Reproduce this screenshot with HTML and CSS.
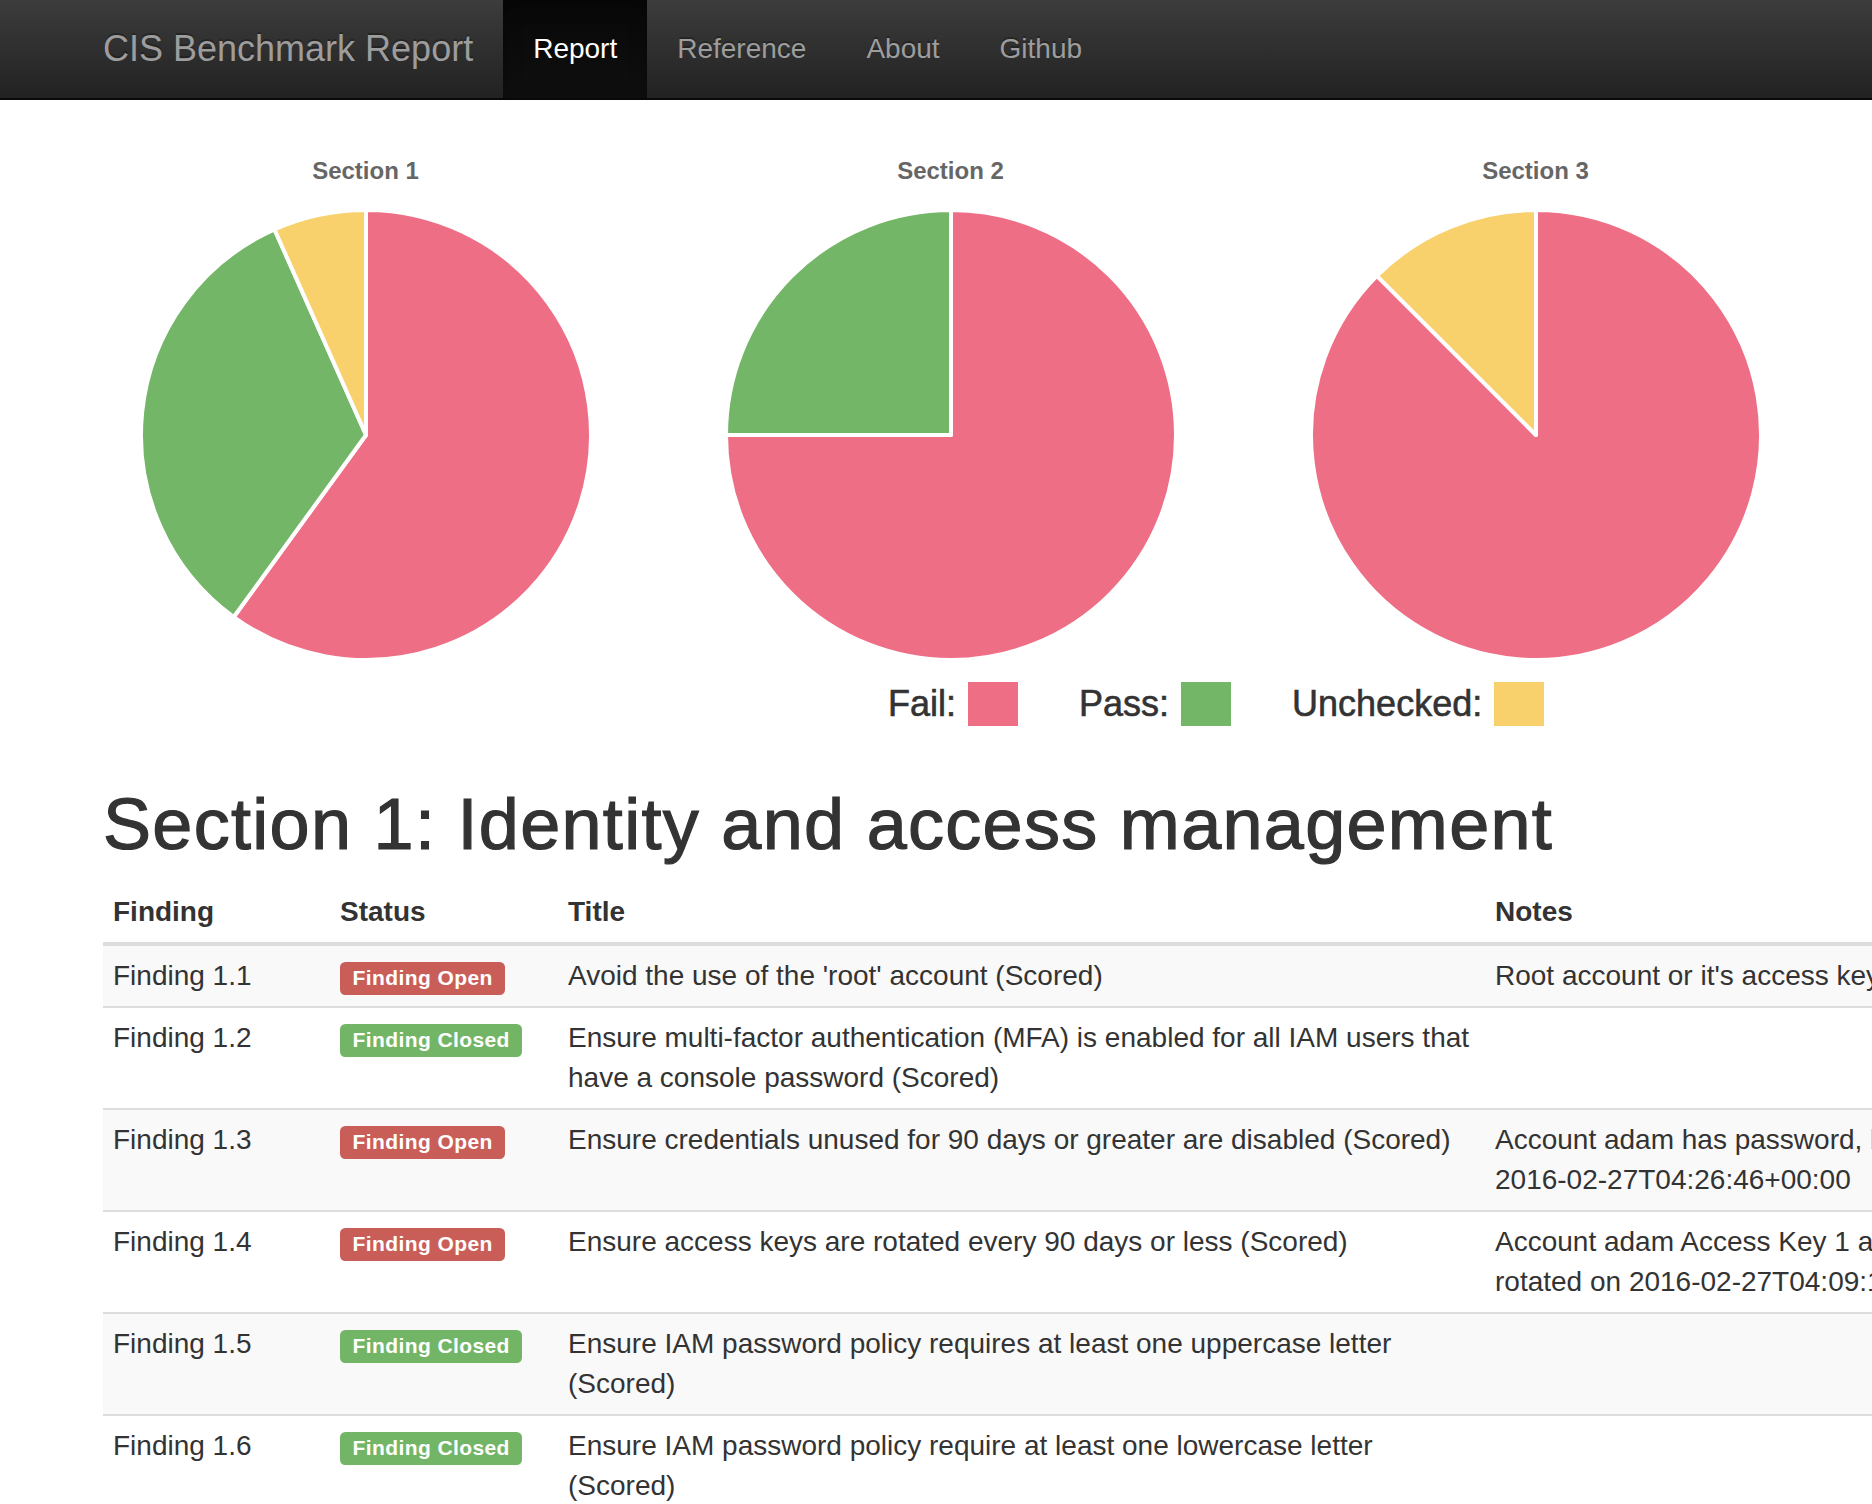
FILE: index.html
```html
<!DOCTYPE html>
<html lang="en">
<head>
<meta charset="utf-8">
<title>CIS Benchmark Report</title>
<link rel="stylesheet" href="styles.css">
</head>
<body>
<nav class="navbar">
  <div class="container nav-inner">
    <a class="brand" href="#">CIS Benchmark Report</a>
    <ul class="nav">
      <li class="active"><a href="#">Report</a></li>
      <li><a href="#">Reference</a></li>
      <li><a href="#">About</a></li>
      <li><a href="#">Github</a></li>
    </ul>
  </div>
</nav>

<div class="container">
  <div class="charts">
    <div class="chart">
      <div class="chart-title">Section 1</div>
      <svg class="pie" width="450" height="450" viewBox="0 0 450 450">
        <path class="fail" d="M225,225 L225,0 A225,225 0 1 1 92.75,407.03 Z"/>
        <path class="pass" d="M225,225 L92.75,407.03 A225,225 0 0 1 133.49,19.45 Z"/>
        <path class="unchecked" d="M225,225 L133.49,19.45 A225,225 0 0 1 225,0 Z"/>
      </svg>
    </div>
    <div class="chart">
      <div class="chart-title">Section 2</div>
      <svg class="pie" width="450" height="450" viewBox="0 0 450 450">
        <path class="fail" d="M225,225 L225,0 A225,225 0 1 1 0,225 Z"/>
        <path class="pass" d="M225,225 L0,225 A225,225 0 0 1 225,0 Z"/>
      </svg>
    </div>
    <div class="chart">
      <div class="chart-title">Section 3</div>
      <svg class="pie" width="450" height="450" viewBox="0 0 450 450">
        <path class="fail" d="M225,225 L225,0 A225,225 0 1 1 65.9,65.9 Z"/>
        <path class="unchecked" d="M225,225 L65.9,65.9 A225,225 0 0 1 225,0 Z"/>
      </svg>
    </div>
  </div>

  <div class="legend">
    <div class="legend-item"><span>Fail:</span><span class="swatch swatch-fail"></span></div>
    <div class="legend-item"><span>Pass:</span><span class="swatch swatch-pass"></span></div>
    <div class="legend-item"><span>Unchecked:</span><span class="swatch swatch-unchecked"></span></div>
  </div>

  <h1 class="section-heading">Section 1: Identity and access management</h1>

  <table class="findings">
    <colgroup>
      <col class="col-finding">
      <col class="col-status">
      <col class="col-title">
      <col class="col-notes">
    </colgroup>
    <thead>
      <tr><th>Finding</th><th>Status</th><th>Title</th><th>Notes</th></tr>
    </thead>
    <tbody>
      <tr>
        <td>Finding 1.1</td>
        <td><span class="label label-open">Finding Open</span></td>
        <td>Avoid the use of the 'root' account (Scored)</td>
        <td>Root account or it's access keys were used recently</td>
      </tr>
      <tr>
        <td>Finding 1.2</td>
        <td><span class="label label-closed">Finding Closed</span></td>
        <td>Ensure multi-factor authentication (MFA) is enabled for all IAM users that have a console password (Scored)</td>
        <td></td>
      </tr>
      <tr>
        <td>Finding 1.3</td>
        <td><span class="label label-open">Finding Open</span></td>
        <td>Ensure credentials unused for 90 days or greater are disabled (Scored)</td>
        <td>Account adam has password, but it hasn't been used since <span class="stamp">2016-02-27T04:26:46+00:00</span></td>
      </tr>
      <tr>
        <td>Finding 1.4</td>
        <td><span class="label label-open">Finding Open</span></td>
        <td>Ensure access keys are rotated every 90 days or less (Scored)</td>
        <td>Account adam Access Key 1 active for over 90 days and was last rotated on <span class="stamp">2016-02-27T04:09:12+00:00</span></td>
      </tr>
      <tr>
        <td>Finding 1.5</td>
        <td><span class="label label-closed">Finding Closed</span></td>
        <td>Ensure IAM password policy requires at least one uppercase letter (Scored)</td>
        <td></td>
      </tr>
      <tr>
        <td>Finding 1.6</td>
        <td><span class="label label-closed">Finding Closed</span></td>
        <td>Ensure IAM password policy require at least one lowercase letter (Scored)</td>
        <td></td>
      </tr>
      <tr>
        <td>Finding 1.7</td>
        <td><span class="label label-closed">Finding Closed</span></td>
        <td>Ensure IAM password policy require at least one symbol (Scored)</td>
        <td></td>
      </tr>
    </tbody>
  </table>
</div>
</body>
</html>
```

FILE: styles.css
```css
html, body {
  overflow: hidden;
}

body {
  margin: 0;
  font-family: "Liberation Sans", Arial, Helvetica, sans-serif;
  font-size: 28px;
  line-height: 40px;
  color: #333;
  background: #fff;
}

.container {
  width: 2340px;
  box-sizing: border-box;
  padding: 0 30px;
  margin-left: 73px;
}

/* ---------- navbar ---------- */
.navbar {
  width: 2486px;
  height: 98px;
  border-bottom: 2px solid #080808;
  background-color: #222;
  background-image: linear-gradient(to bottom, #3c3c3c 0, #222 100%);
}

.nav-inner {
  display: flex;
  height: 98px;
}

.brand {
  margin-left: -30px;
  padding: 0 30px;
  font-size: 36px;
  line-height: 98px;
  color: #9d9d9d;
  text-decoration: none;
  text-shadow: 0 -2px 0 rgba(0, 0, 0, .25);
}

.nav {
  display: flex;
  margin: 0;
  padding: 0;
  list-style: none;
}

.nav li a {
  display: block;
  padding: 0 30px;
  font-size: 28px;
  line-height: 98px;
  color: #9d9d9d;
  text-decoration: none;
  text-shadow: 0 -2px 0 rgba(0, 0, 0, .25);
}

.nav li.active a {
  color: #fff;
  background-image: linear-gradient(to bottom, #080808 0, #0f0f0f 100%);
  box-shadow: inset 0 6px 18px rgba(0, 0, 0, .25);
}

/* ---------- charts ---------- */
.charts {
  display: flex;
  margin: 57px -30px 0;
}

.chart {
  width: 585px;
  box-sizing: border-box;
  padding: 0 30px;
  display: flex;
  flex-direction: column;
  align-items: center;
}

.chart-title {
  font-size: 24px;
  line-height: 28px;
  font-weight: bold;
  color: #666;
  margin-bottom: 25px;
}

.pie {
  display: block;
  overflow: visible;
}

.pie path {
  stroke: #fff;
  stroke-width: 4;
  stroke-linejoin: round;
}

.pie .fail { fill: #ee6e85; }
.pie .pass { fill: #74b667; }
.pie .unchecked { fill: #f8d06c; }

/* ---------- legend ---------- */
.legend {
  display: flex;
  gap: 61px;
  margin-top: 22px;
  padding-left: 785px;
  font-size: 36px;
  line-height: 44px;
  color: #333;
  -webkit-text-stroke: 0.6px #333;
}

.legend-item {
  display: flex;
  align-items: center;
  gap: 12px;
}

.swatch {
  display: block;
  width: 50px;
  height: 44px;
}

.swatch-fail { background: #ee6e85; }
.swatch-pass { background: #74b667; }
.swatch-unchecked { background: #f8d06c; }

/* ---------- heading ---------- */
.section-heading {
  margin: 58px 0 18px;
  font-size: 72px;
  line-height: 80px;
  font-weight: normal;
  letter-spacing: 1.3px;
  -webkit-text-stroke: 1.2px #333;
  color: #333;
}

/* ---------- table ---------- */
.findings {
  width: 2280px;
  table-layout: fixed;
  border-collapse: collapse;
  border-spacing: 0;
}

.col-finding { width: 227px; }
.col-status { width: 228px; }
.col-title { width: 927px; }
.col-notes { width: 898px; }

.findings th,
.findings td {
  padding: 10px;
  text-align: left;
  vertical-align: top;
  line-height: 40px;
}

.findings th {
  font-weight: bold;
  border-bottom: 4px solid #ddd;
}

.findings td {
  border-top: 2px solid #ddd;
}

.findings tbody tr:nth-child(odd) {
  background: #f9f9f9;
}

.stamp {
  white-space: nowrap;
}

.label {
  display: inline;
  padding: 0.2em 0.6em 0.3em;
  font-size: 21px;
  font-weight: bold;
  line-height: 1;
  letter-spacing: 0.4px;
  color: #fff;
  white-space: nowrap;
  border-radius: 0.25em;
}

.label-open { background: #c95e59; }
.label-closed { background: #73b566; }
```
